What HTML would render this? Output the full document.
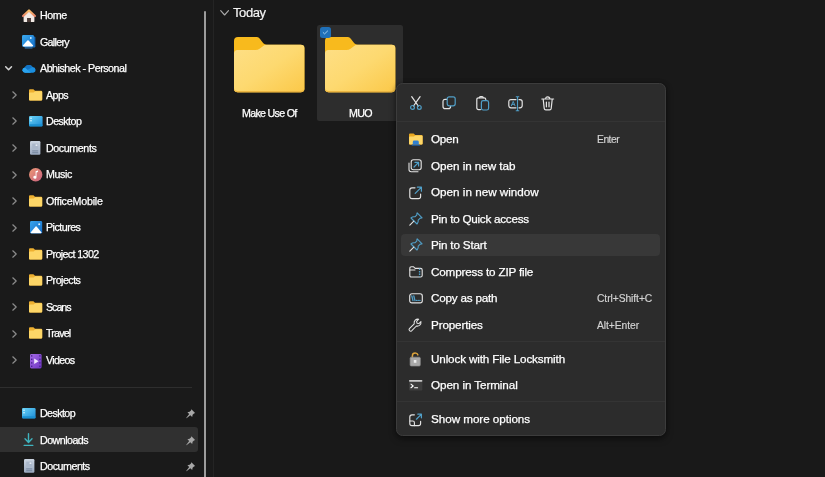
<!DOCTYPE html>
<html><head><meta charset="utf-8"><title>File Explorer</title>
<style>
*{box-sizing:border-box;margin:0;padding:0}
html,body{width:825px;height:477px;overflow:hidden;background:#191919;font-family:"Liberation Sans",sans-serif;color:#fff}
body{position:relative}
#sb{position:absolute;left:0;top:0;width:213px;height:477px;background:#1a1a1a}
#div{position:absolute;left:212.7px;top:0;width:1.8px;height:477px;background:#242424}
#scr{position:absolute;left:204.2px;top:11px;width:1.7px;height:470px;background:#9c9c9c;border-radius:1px}
svg{position:absolute;overflow:visible}
.tx{position:absolute;white-space:pre;line-height:normal;will-change:transform;-webkit-text-stroke:.25px currentColor}
.sep{position:absolute;left:0;top:386.5px;width:192px;height:1px;background:#2e2e2e}
.selrow{position:absolute;left:0;top:427px;width:197.5px;height:25.4px;background:#303030;border-radius:0 3px 3px 0}
.selbox{position:absolute;left:317.2px;top:25.1px;width:86.2px;height:96.2px;background:#2d2d2d;border-radius:2.5px}
.chk{position:absolute;left:320px;top:27.2px;width:10.8px;height:10.4px;background:#1f70b8;border-radius:2.5px}
.chk svg{left:0;top:0}
#menu{position:absolute;left:396px;top:83.4px;width:270px;height:352.6px;background:#2c2c2c;border:1px solid #3c3c3c;border-radius:6.5px;box-shadow:0 3px 7px rgba(0,0,0,.4),0 0 4px rgba(0,0,0,.3)}
.msep{position:absolute;left:397px;width:268px;height:1px;background:#343434}
.hov{position:absolute;left:401.3px;top:234.1px;width:258.7px;height:22.2px;background:#383838;border-radius:4px}
</style></head><body>
<div id="sb">
<svg style="left:22.1px;top:9.4px" width="14" height="13.2" viewBox="0 0 14 13.2"><defs><linearGradient id="hr" x1="0" y1="0" x2="0" y2="1"><stop offset="0" stop-color="#f8bf6a"/><stop offset="1" stop-color="#e98468"/></linearGradient></defs><path d="M1.6 6V12.2Q1.6 13.1 2.5 13.1H5.3V9H8.7V13.1H11.5Q12.4 13.1 12.4 12.2V6L7 1.6Z" fill="#f1e9e4"/><path d="M5.3 9H8.7V13.1H5.3Z" fill="#4d3c37"/><path d="M1.1 7L7 1.5L12.9 7" fill="none" stroke="url(#hr)" stroke-width="2.3" stroke-linecap="round" stroke-linejoin="round"/></svg>
<div class="tx" style="left:40.2px;top:9.02px;font-size:10.7px;letter-spacing:-0.429px;color:#fff;">Home</div>
<svg style="left:22.2px;top:34.8px" width="13.6" height="13.6" viewBox="0 0 13.6 13.6"><defs><linearGradient id="gg" x1="0" y1="0" x2="1" y2="1"><stop offset="0" stop-color="#3cabf0"/><stop offset="1" stop-color="#1470c8"/></linearGradient></defs><rect x="2" y="1.4" width="11.4" height="11" rx="1.2" fill="#1567b5"/><rect x="0" y="0" width="12" height="12" rx="1.4" fill="url(#gg)"/><path d="M.8 10.6L5.4 5.4Q6 4.9 6.6 5.4L11.2 10.6Q11 11.4 10.4 11.4H1.6Q1 11.4 .8 10.6Z" fill="#fff"/><circle cx="8.8" cy="3" r=".9" fill="#d8efff"/><rect x="2.6" y="12.6" width="8" height=".9" rx=".4" fill="#2f7ec2"/></svg>
<div class="tx" style="left:40.2px;top:35.54px;font-size:10.7px;letter-spacing:-0.694px;color:#fff;">Gallery</div>
<svg style="left:4.6px;top:66px" width="7.2" height="4.6" viewBox="0 0 7.2 4.6" fill="none" stroke="#d4d4d4" stroke-width="1.5" stroke-linecap="round" stroke-linejoin="round"><path d="M.7 .7L3.6 3.8L6.5 .7"/></svg>
<svg style="left:21.9px;top:64.8px" width="14.4" height="7.8" preserveAspectRatio="none" viewBox="0 0 14.4 9"><path d="M3.2 9A3.1 3.1 0 0 1 2.8 2.9A4.3 4.3 0 0 1 10.6 2.2A3.5 3.5 0 0 1 11.2 9Z" fill="#1a8fe0"/><path d="M2.8 2.9A4.3 4.3 0 0 1 10.6 2.2L5 6Z" fill="#1373c4"/><path d="M3.2 9A3.1 3.1 0 0 1 2.8 2.9L9 9Z" fill="#2aa3ee"/></svg>
<div class="tx" style="left:40.2px;top:62.06px;font-size:10.7px;letter-spacing:-0.492px;color:#fff;">Abhishek - Personal</div>
<svg style="left:12.2px;top:90.96000000000001px" width="5" height="8" viewBox="0 0 5 8" fill="none" stroke="#8c8c8c" stroke-width="1.2" stroke-linecap="round" stroke-linejoin="round"><path d="M.8 .8L4.2 4L.8 7.2"/></svg>
<svg style="left:28.8px;top:88.5px" width="13.2" height="11.6" viewBox="0 0 13.2 11.6"><path d="M0 1.2Q0 .2 1 .2H4.4L6 1.8H12.2Q13.2 1.8 13.2 2.8V10.4Q13.2 11.4 12.2 11.4H1Q0 11.4 0 10.4Z" fill="#eeb030"/><path d="M0 4.2Q0 3.4 .9 3.4H4.6L6.2 2.2H12.3Q13.2 2.2 13.2 3V10.5Q13.2 11.5 12.2 11.5H1Q0 11.5 0 10.5Z" fill="#fdd667"/></svg>
<div class="tx" style="left:46.4px;top:88.58px;font-size:10.7px;letter-spacing:-0.594px;color:#fff;">Apps</div>
<svg style="left:12.2px;top:117.48px" width="5" height="8" viewBox="0 0 5 8" fill="none" stroke="#8c8c8c" stroke-width="1.2" stroke-linecap="round" stroke-linejoin="round"><path d="M.8 .8L4.2 4L.8 7.2"/></svg>
<svg style="left:28.8px;top:115.6px" width="13.6" height="10.6" viewBox="0 0 13.6 10.6"><defs><linearGradient id="dg115" x1="0" y1="0" x2="1" y2="1"><stop offset="0" stop-color="#6ad4f7"/><stop offset="1" stop-color="#1c8bd6"/></linearGradient></defs><rect x="0" y="0" width="13.6" height="10.2" rx="1.2" fill="url(#dg115)"/><rect x="0" y="8.2" width="13.6" height="2.2" rx="1" fill="#1a8fd0"/><rect x="1.3" y="1.6" width="1.4" height="1.4" fill="#d5f1fc"/><rect x="1.3" y="4" width="1.4" height="1.4" fill="#d5f1fc"/></svg>
<div class="tx" style="left:46.4px;top:115.10px;font-size:10.7px;letter-spacing:-0.560px;color:#fff;">Desktop</div>
<svg style="left:12.2px;top:143.99999999999997px" width="5" height="8" viewBox="0 0 5 8" fill="none" stroke="#8c8c8c" stroke-width="1.2" stroke-linecap="round" stroke-linejoin="round"><path d="M.8 .8L4.2 4L.8 7.2"/></svg>
<svg style="left:30.4px;top:141.2px" width="10.4" height="13.8" viewBox="0 0 10.4 13.8"><defs><linearGradient id="dc141" x1="0" y1="0" x2="0" y2="1"><stop offset="0" stop-color="#ccd5e1"/><stop offset="1" stop-color="#9aa9bf"/></linearGradient></defs><rect x="0" y="0" width="10.4" height="13.8" rx="1.2" fill="url(#dc141)"/><rect x="2.2" y="2.6" width="6" height="5.2" fill="#aab7ca"/><rect x="5.6" y="3.4" width="1.8" height="1.6" fill="#e6ebf2"/><rect x="2.2" y="9.4" width="6" height="1" fill="#76879f"/><rect x="2.2" y="11.2" width="6" height="1" fill="#76879f"/></svg>
<div class="tx" style="left:46.4px;top:141.62px;font-size:10.7px;letter-spacing:-0.407px;color:#fff;">Documents</div>
<svg style="left:12.2px;top:170.51999999999998px" width="5" height="8" viewBox="0 0 5 8" fill="none" stroke="#8c8c8c" stroke-width="1.2" stroke-linecap="round" stroke-linejoin="round"><path d="M.8 .8L4.2 4L.8 7.2"/></svg>
<svg style="left:28.8px;top:168.0px" width="13.4" height="13.4" viewBox="0 0 13.4 13.4"><defs><linearGradient id="mg" x1="0" y1="0" x2="1" y2="1"><stop offset="0" stop-color="#ee9a76"/><stop offset="1" stop-color="#c75f7d"/></linearGradient></defs><circle cx="6.7" cy="6.7" r="6.7" fill="url(#mg)"/><path d="M6.6 3.2L9 2.6V4L7.5 4.4V9.2A1.6 1.5 0 1 1 6.6 7.9Z" fill="#fff"/></svg>
<div class="tx" style="left:46.4px;top:168.14px;font-size:10.7px;letter-spacing:-0.384px;color:#fff;">Music</div>
<svg style="left:12.2px;top:197.03999999999996px" width="5" height="8" viewBox="0 0 5 8" fill="none" stroke="#8c8c8c" stroke-width="1.2" stroke-linecap="round" stroke-linejoin="round"><path d="M.8 .8L4.2 4L.8 7.2"/></svg>
<svg style="left:28.8px;top:194.5px" width="13.2" height="11.6" viewBox="0 0 13.2 11.6"><path d="M0 1.2Q0 .2 1 .2H4.4L6 1.8H12.2Q13.2 1.8 13.2 2.8V10.4Q13.2 11.4 12.2 11.4H1Q0 11.4 0 10.4Z" fill="#eeb030"/><path d="M0 4.2Q0 3.4 .9 3.4H4.6L6.2 2.2H12.3Q13.2 2.2 13.2 3V10.5Q13.2 11.5 12.2 11.5H1Q0 11.5 0 10.5Z" fill="#fdd667"/></svg>
<div class="tx" style="left:46.4px;top:194.66px;font-size:10.7px;letter-spacing:-0.202px;color:#fff;">OfficeMobile</div>
<svg style="left:12.2px;top:223.55999999999997px" width="5" height="8" viewBox="0 0 5 8" fill="none" stroke="#8c8c8c" stroke-width="1.2" stroke-linecap="round" stroke-linejoin="round"><path d="M.8 .8L4.2 4L.8 7.2"/></svg>
<svg style="left:29.6px;top:221.2px" width="12.2" height="12.6" viewBox="0 0 12.2 12.6"><defs><linearGradient id="pg221" x1="0" y1="0" x2="1" y2="1"><stop offset="0" stop-color="#3aa5ee"/><stop offset="1" stop-color="#1169c4"/></linearGradient></defs><rect width="12.2" height="12.6" rx="1.4" fill="url(#pg221)"/><path d="M.6 11.6L5.6 5.6Q6.1 5.1 6.6 5.6L11.6 11.6Q11.4 12.2 10.8 12.2H1.4Q.8 12.2 .6 11.6Z" fill="#fff"/><circle cx="9.2" cy="3.2" r="1" fill="#d8efff"/></svg>
<div class="tx" style="left:46.4px;top:221.18px;font-size:10.7px;letter-spacing:-0.526px;color:#fff;">Pictures</div>
<svg style="left:12.2px;top:250.07999999999998px" width="5" height="8" viewBox="0 0 5 8" fill="none" stroke="#8c8c8c" stroke-width="1.2" stroke-linecap="round" stroke-linejoin="round"><path d="M.8 .8L4.2 4L.8 7.2"/></svg>
<svg style="left:28.8px;top:247.6px" width="13.2" height="11.6" viewBox="0 0 13.2 11.6"><path d="M0 1.2Q0 .2 1 .2H4.4L6 1.8H12.2Q13.2 1.8 13.2 2.8V10.4Q13.2 11.4 12.2 11.4H1Q0 11.4 0 10.4Z" fill="#eeb030"/><path d="M0 4.2Q0 3.4 .9 3.4H4.6L6.2 2.2H12.3Q13.2 2.2 13.2 3V10.5Q13.2 11.5 12.2 11.5H1Q0 11.5 0 10.5Z" fill="#fdd667"/></svg>
<div class="tx" style="left:46.4px;top:247.70px;font-size:10.7px;letter-spacing:-0.618px;color:#fff;">Project 1302</div>
<svg style="left:12.2px;top:276.59999999999997px" width="5" height="8" viewBox="0 0 5 8" fill="none" stroke="#8c8c8c" stroke-width="1.2" stroke-linecap="round" stroke-linejoin="round"><path d="M.8 .8L4.2 4L.8 7.2"/></svg>
<svg style="left:28.8px;top:274.1px" width="13.2" height="11.6" viewBox="0 0 13.2 11.6"><path d="M0 1.2Q0 .2 1 .2H4.4L6 1.8H12.2Q13.2 1.8 13.2 2.8V10.4Q13.2 11.4 12.2 11.4H1Q0 11.4 0 10.4Z" fill="#eeb030"/><path d="M0 4.2Q0 3.4 .9 3.4H4.6L6.2 2.2H12.3Q13.2 2.2 13.2 3V10.5Q13.2 11.5 12.2 11.5H1Q0 11.5 0 10.5Z" fill="#fdd667"/></svg>
<div class="tx" style="left:46.4px;top:274.22px;font-size:10.7px;letter-spacing:-0.526px;color:#fff;">Projects</div>
<svg style="left:12.2px;top:303.11999999999995px" width="5" height="8" viewBox="0 0 5 8" fill="none" stroke="#8c8c8c" stroke-width="1.2" stroke-linecap="round" stroke-linejoin="round"><path d="M.8 .8L4.2 4L.8 7.2"/></svg>
<svg style="left:28.8px;top:300.6px" width="13.2" height="11.6" viewBox="0 0 13.2 11.6"><path d="M0 1.2Q0 .2 1 .2H4.4L6 1.8H12.2Q13.2 1.8 13.2 2.8V10.4Q13.2 11.4 12.2 11.4H1Q0 11.4 0 10.4Z" fill="#eeb030"/><path d="M0 4.2Q0 3.4 .9 3.4H4.6L6.2 2.2H12.3Q13.2 2.2 13.2 3V10.5Q13.2 11.5 12.2 11.5H1Q0 11.5 0 10.5Z" fill="#fdd667"/></svg>
<div class="tx" style="left:46.4px;top:300.74px;font-size:10.7px;letter-spacing:-1.024px;color:#fff;">Scans</div>
<svg style="left:12.2px;top:329.64px" width="5" height="8" viewBox="0 0 5 8" fill="none" stroke="#8c8c8c" stroke-width="1.2" stroke-linecap="round" stroke-linejoin="round"><path d="M.8 .8L4.2 4L.8 7.2"/></svg>
<svg style="left:28.8px;top:327.1px" width="13.2" height="11.6" viewBox="0 0 13.2 11.6"><path d="M0 1.2Q0 .2 1 .2H4.4L6 1.8H12.2Q13.2 1.8 13.2 2.8V10.4Q13.2 11.4 12.2 11.4H1Q0 11.4 0 10.4Z" fill="#eeb030"/><path d="M0 4.2Q0 3.4 .9 3.4H4.6L6.2 2.2H12.3Q13.2 2.2 13.2 3V10.5Q13.2 11.5 12.2 11.5H1Q0 11.5 0 10.5Z" fill="#fdd667"/></svg>
<div class="tx" style="left:46.4px;top:327.26px;font-size:10.7px;letter-spacing:-0.833px;color:#fff;">Travel</div>
<svg style="left:12.2px;top:356.15999999999997px" width="5" height="8" viewBox="0 0 5 8" fill="none" stroke="#8c8c8c" stroke-width="1.2" stroke-linecap="round" stroke-linejoin="round"><path d="M.8 .8L4.2 4L.8 7.2"/></svg>
<svg style="left:30.2px;top:353.5px" width="11.6" height="14.4" viewBox="0 0 11.6 14.4"><defs><linearGradient id="vg" x1="0" y1="0" x2="1" y2="1"><stop offset="0" stop-color="#a56be6"/><stop offset="1" stop-color="#7036c4"/></linearGradient></defs><rect width="11.6" height="14.4" rx="1.4" fill="url(#vg)"/><g fill="#4b2391"><rect x="1" y="1.2" width="1.4" height="1.4"/><rect x="1" y="4.6" width="1.4" height="1.4"/><rect x="1" y="8.2" width="1.4" height="1.4"/><rect x="1" y="11.6" width="1.4" height="1.4"/><rect x="9.2" y="1.2" width="1.4" height="1.4"/><rect x="9.2" y="4.6" width="1.4" height="1.4"/><rect x="9.2" y="8.2" width="1.4" height="1.4"/><rect x="9.2" y="11.6" width="1.4" height="1.4"/></g><path d="M4.2 4.4L8.6 7.2L4.2 10Z" fill="#f1e6ff"/></svg>
<div class="tx" style="left:46.4px;top:353.78px;font-size:10.7px;letter-spacing:-0.700px;color:#fff;">Videos</div>
<div class="sep"></div>
<div class="selrow"></div>
<svg style="left:22px;top:407.8px" width="13.6" height="10.6" viewBox="0 0 13.6 10.6"><defs><linearGradient id="dg407" x1="0" y1="0" x2="1" y2="1"><stop offset="0" stop-color="#6ad4f7"/><stop offset="1" stop-color="#1c8bd6"/></linearGradient></defs><rect x="0" y="0" width="13.6" height="10.2" rx="1.2" fill="url(#dg407)"/><rect x="0" y="8.2" width="13.6" height="2.2" rx="1" fill="#1a8fd0"/><rect x="1.3" y="1.6" width="1.4" height="1.4" fill="#d5f1fc"/><rect x="1.3" y="4" width="1.4" height="1.4" fill="#d5f1fc"/></svg>
<div class="tx" style="left:40.2px;top:407.32px;font-size:10.7px;letter-spacing:-0.603px;color:#fff;">Desktop</div>
<svg style="left:23.4px;top:433px" width="11" height="13.4" viewBox="0 0 11 13.4" fill="none" stroke="#3fb4bf" stroke-width="1.4" stroke-linecap="round" stroke-linejoin="round"><path d="M5.5 .8V9.2M2 5.8L5.5 9.4L9 5.8M1.2 12.4H9.8"/></svg>
<div class="tx" style="left:40.2px;top:433.72px;font-size:10.7px;letter-spacing:-0.542px;color:#fff;">Downloads</div>
<svg style="left:23.8px;top:459.2px" width="10.4" height="13.8" viewBox="0 0 10.4 13.8"><defs><linearGradient id="dc459" x1="0" y1="0" x2="0" y2="1"><stop offset="0" stop-color="#ccd5e1"/><stop offset="1" stop-color="#9aa9bf"/></linearGradient></defs><rect x="0" y="0" width="10.4" height="13.8" rx="1.2" fill="url(#dc459)"/><rect x="2.2" y="2.6" width="6" height="5.2" fill="#aab7ca"/><rect x="5.6" y="3.4" width="1.8" height="1.6" fill="#e6ebf2"/><rect x="2.2" y="9.4" width="6" height="1" fill="#76879f"/><rect x="2.2" y="11.2" width="6" height="1" fill="#76879f"/></svg>
<div class="tx" style="left:40.2px;top:460.12px;font-size:10.7px;letter-spacing:-0.485px;color:#fff;">Documents</div>
<svg style="left:186px;top:409.1px" width="9.4" height="9.4" viewBox="0 0 9.4 9.4"><path d="M5.4 .3L9.1 4L8 4.4L6.6 5.8L6.2 8L4.3 6.2L.5 9.2L.2 8.9L3.2 5.1L1.4 3.2L3.6 2.8L5 1.4Z" fill="#a8a8a8"/></svg>
<svg style="left:186px;top:435.6px" width="9.4" height="9.4" viewBox="0 0 9.4 9.4"><path d="M5.4 .3L9.1 4L8 4.4L6.6 5.8L6.2 8L4.3 6.2L.5 9.2L.2 8.9L3.2 5.1L1.4 3.2L3.6 2.8L5 1.4Z" fill="#a8a8a8"/></svg>
<svg style="left:186px;top:462.3px" width="9.4" height="9.4" viewBox="0 0 9.4 9.4"><path d="M5.4 .3L9.1 4L8 4.4L6.6 5.8L6.2 8L4.3 6.2L.5 9.2L.2 8.9L3.2 5.1L1.4 3.2L3.6 2.8L5 1.4Z" fill="#a8a8a8"/></svg>
</div>
<div id="scr"></div><div id="div"></div>
<svg style="left:219.7px;top:10px" width="9.2" height="5.8" viewBox="0 0 9.2 5.8" fill="none" stroke="#aaaaaa" stroke-width="1.15" stroke-linecap="round" stroke-linejoin="round"><path d="M.7 .7L4.6 5.0L8.5 .7"/></svg>
<div class="tx" style="left:232.7px;top:5.23px;font-size:13px;letter-spacing:-0.421px;color:#f4f4f4;-webkit-text-stroke:.18px currentColor">Today</div>
<div class="selbox"></div>
<svg style="left:234.4px;top:37.1px" width="70.4" height="55.3" preserveAspectRatio="none" viewBox="0 0 70.6 55.8"><defs><linearGradient id="bfa" x1="0" y1="0" x2="1" y2="1"><stop offset="0" stop-color="#fedf86"/><stop offset=".5" stop-color="#fdd970"/><stop offset="1" stop-color="#fbc848"/></linearGradient></defs><path d="M0 4Q0 0 4 0H22.4Q24.4 0 25.7 1.5L29.4 6.4Q30.7 7.9 33 7.9H66.8Q70.6 7.9 70.6 11.2V52Q70.6 55.8 66.8 55.8H3.8Q0 55.8 0 52Z" fill="#f8ba1d"/><path d="M0 16.8Q0 13.2 3.6 13.2H21.6Q24 13.2 25.6 11.8L29 9.3Q30.6 7.9 33 7.9H66.8Q70.6 7.9 70.6 11.2V52Q70.6 55.8 66.8 55.8H3.8Q0 55.8 0 52Z" fill="url(#bfa)"/><path d="M0 51V52Q0 55.8 3.8 55.8H66.8Q70.6 55.8 70.6 52V51Q70.6 54.6 66.8 54.6H3.8Q0 54.6 0 51Z" fill="#ecb540"/></svg>
<svg style="left:324.8px;top:37.1px" width="70.3" height="55.3" preserveAspectRatio="none" viewBox="0 0 70.6 55.8"><defs><linearGradient id="bfb" x1="0" y1="0" x2="1" y2="1"><stop offset="0" stop-color="#fedf86"/><stop offset=".5" stop-color="#fdd970"/><stop offset="1" stop-color="#fbc848"/></linearGradient></defs><path d="M0 4Q0 0 4 0H22.4Q24.4 0 25.7 1.5L29.4 6.4Q30.7 7.9 33 7.9H66.8Q70.6 7.9 70.6 11.2V52Q70.6 55.8 66.8 55.8H3.8Q0 55.8 0 52Z" fill="#f8ba1d"/><path d="M0 16.8Q0 13.2 3.6 13.2H21.6Q24 13.2 25.6 11.8L29 9.3Q30.6 7.9 33 7.9H66.8Q70.6 7.9 70.6 11.2V52Q70.6 55.8 66.8 55.8H3.8Q0 55.8 0 52Z" fill="url(#bfb)"/><path d="M0 51V52Q0 55.8 3.8 55.8H66.8Q70.6 55.8 70.6 52V51Q70.6 54.6 66.8 54.6H3.8Q0 54.6 0 51Z" fill="#ecb540"/></svg>
<div class="chk"><svg width="10.8" height="10.4" viewBox="0 0 10.8 10.4" fill="none" stroke="#a6d4f4" stroke-width=".95" stroke-linecap="round" stroke-linejoin="round"><path d="M3.2 5.6L4.6 6.9L7.6 4"/></svg></div>
<div class="tx" style="left:242.2px;top:106.92px;font-size:10.7px;letter-spacing:-0.707px;color:#fff;">Make Use Of</div>
<div class="tx" style="left:349.4px;top:106.92px;font-size:10.7px;letter-spacing:-0.646px;color:#fff;">MUO</div>
<div id="menu"></div>
<svg style="left:408.6px;top:96px" width="14" height="15" viewBox="0 0 14 15" fill="none" stroke-linecap="round" stroke-linejoin="round" ><path d="M2.7 .7L9.3 10M11.1 .7L4.5 10" stroke="#e4e4e4" stroke-width="1.25"/><circle cx="3.5" cy="11.4" r="1.9" stroke="#509fc8" stroke-width="1.2"/><circle cx="10.3" cy="11.4" r="1.9" stroke="#509fc8" stroke-width="1.2"/></svg>
<svg style="left:442px;top:96.4px" width="14" height="14" viewBox="0 0 14 14" fill="none" stroke-linecap="round" stroke-linejoin="round" ><path d="M4.6 3.4H3.2Q1 3.4 1 5.6V10.4Q1 12.6 3.2 12.6H6.4Q8.6 12.6 8.6 10.4" stroke="#e4e4e4" stroke-width="1.2"/><rect x="5.2" y=".8" width="8" height="9" rx="2" stroke="#509fc8" stroke-width="1.2"/></svg>
<svg style="left:475.6px;top:96px" width="14" height="15" viewBox="0 0 14 15" fill="none" stroke-linecap="round" stroke-linejoin="round" ><path d="M4.4 13.6H2.6Q.8 13.6 .8 11.8V3.6Q.8 1.8 2.6 1.8H8Q9.8 1.8 9.8 3.4" stroke="#e4e4e4" stroke-width="1.2"/><path d="M3.4 1.8Q3.4 .6 4.4 .6H6.2Q7.2 .6 7.2 1.8" stroke="#e4e4e4" stroke-width="1.1"/><rect x="5.4" y="4.6" width="7.2" height="9.4" rx="1.8" stroke="#509fc8" stroke-width="1.2"/></svg>
<svg style="left:507.6px;top:95.6px" width="16" height="16" viewBox="0 0 16 16" fill="none" stroke-linecap="round" stroke-linejoin="round" ><path d="M8 3.6H3Q.8 3.6 .8 5.8V9.6Q.8 11.8 3 11.8H8M11 3.6H12Q14.2 3.6 14.2 5.8V9.6Q14.2 11.8 12 11.8H11" stroke="#e4e4e4" stroke-width="1.2"/><path d="M9.5 1V14.6M8.2 .8H10.8M8.2 14.8H10.8" stroke="#509fc8" stroke-width="1.1"/><path d="M3.4 9.8L5.2 5.4L7 9.8M4 8.4H6.4" stroke="#509fc8" stroke-width=".9"/></svg>
<svg style="left:541.4px;top:96px" width="14" height="15" viewBox="0 0 14 15" fill="none" stroke-linecap="round" stroke-linejoin="round" ><path d="M.8 3H12.6M4.6 3Q4.6 .8 6.7 .8Q8.8 .8 8.8 3M2.2 3.2L3.2 12.4Q3.4 13.8 4.8 13.8H8.6Q10 13.8 10.2 12.4L11.2 3.2M5.4 6V10.8M8 6V10.8" stroke="#e4e4e4" stroke-width="1.2"/></svg>
<div class="msep" style="top:121.4px"></div>
<div class="hov"></div>
<div class="tx" style="left:431.4px;top:132.21px;font-size:11.7px;letter-spacing:-0.273px;color:#fff;">Open</div>
<div class="tx" style="left:431.4px;top:158.71px;font-size:11.7px;letter-spacing:-0.042px;color:#fff;">Open in new tab</div>
<div class="tx" style="left:431.4px;top:185.21px;font-size:11.7px;letter-spacing:-0.003px;color:#fff;">Open in new window</div>
<div class="tx" style="left:431.4px;top:211.71px;font-size:11.7px;letter-spacing:-0.250px;color:#fff;">Pin to Quick access</div>
<div class="tx" style="left:431.4px;top:238.21px;font-size:11.7px;letter-spacing:-0.194px;color:#fff;">Pin to Start</div>
<div class="tx" style="left:431.4px;top:264.71px;font-size:11.7px;letter-spacing:-0.173px;color:#fff;">Compress to ZIP file</div>
<div class="tx" style="left:431.4px;top:291.21px;font-size:11.7px;letter-spacing:-0.206px;color:#fff;">Copy as path</div>
<div class="tx" style="left:431.4px;top:317.71px;font-size:11.7px;letter-spacing:-0.148px;color:#fff;">Properties</div>
<div class="tx" style="left:431.4px;top:351.81px;font-size:11.7px;letter-spacing:-0.142px;color:#fff;">Unlock with File Locksmith</div>
<div class="tx" style="left:431.4px;top:378.41px;font-size:11.7px;letter-spacing:-0.090px;color:#fff;">Open in Terminal</div>
<div class="tx" style="left:431.4px;top:412.21px;font-size:11.7px;letter-spacing:-0.056px;color:#fff;">Show more options</div>
<div class="tx" style="left:597.2px;top:133.58px;font-size:10.3px;letter-spacing:-0.485px;color:#d4d4d4;-webkit-text-stroke:.15px currentColor">Enter</div>
<div class="tx" style="left:596.8px;top:292.88px;font-size:10.3px;letter-spacing:-0.074px;color:#d4d4d4;-webkit-text-stroke:.15px currentColor">Ctrl+Shift+C</div>
<div class="tx" style="left:596.8px;top:319.88px;font-size:10.3px;letter-spacing:-0.071px;color:#d4d4d4;-webkit-text-stroke:.15px currentColor">Alt+Enter</div>
<div class="msep" style="top:341.4px"></div>
<div class="msep" style="top:401.2px"></div>
<svg style="left:408.6px;top:132.9px" width="13.6" height="13" viewBox="0 0 13.6 13" fill="none" stroke-linecap="round" stroke-linejoin="round" ><path d="M0 1.4Q0 .4 1 .4H4.6L6.2 2H12.6Q13.6 2 13.6 3V10.6Q13.6 11.6 12.6 11.6H1Q0 11.6 0 10.6Z" fill="#e9a820"/><path d="M0 4.4Q0 3.6 .9 3.6H4.8L6.4 2.4H12.7Q13.6 2.4 13.6 3.2V10.6Q13.6 11.6 12.6 11.6H1Q0 11.6 0 10.6Z" fill="#fdd667"/><path d="M3.8 9Q3.8 7.6 5.2 7.6H8.4Q9.8 7.6 9.8 9V11.6H3.8Z" fill="#2f7fd0"/><rect x="2.6" y="11.4" width="8.4" height="1.4" rx=".6" fill="#1d5fa8"/></svg>
<svg style="left:408.4px;top:158.6px" width="14" height="14" viewBox="0 0 14 14" fill="none" stroke-linecap="round" stroke-linejoin="round" ><path d="M1 4V10.6Q1 12.8 3.2 12.8H10" stroke="#e4e4e4" stroke-width="1.1"/><rect x="3.2" y=".8" width="10" height="10" rx="2.2" stroke="#e4e4e4" stroke-width="1.1"/><path d="M6 8L10.4 3.6M7 3.4H10.6V7" stroke="#509fc8" stroke-width="1.2"/></svg>
<svg style="left:409px;top:185.9px" width="14" height="14" viewBox="0 0 14 14" fill="none" stroke-linecap="round" stroke-linejoin="round" ><path d="M6 1.8H3Q.8 1.8 .8 4V10.4Q.8 12.6 3 12.6H9.4Q11.6 12.6 11.6 10.4V8" stroke="#e4e4e4" stroke-width="1.15"/><path d="M6.2 7.4L12 1.6M8.4 1.2H12.4V5.2" stroke="#509fc8" stroke-width="1.25"/></svg>
<svg style="left:408.9px;top:211.7px" width="14" height="14" viewBox="0 0 14 14" fill="none" stroke-linecap="round" stroke-linejoin="round" ><path d="M8.2 .9L13.1 5.8Q12.2 6.4 11.2 6.1L9.2 8.1Q9.6 10.4 8 12L2 6Q3.6 4.4 5.9 4.8L7.9 2.8Q7.6 1.8 8.2 .9Z" stroke="#509fc8" stroke-width="1.1"/><path d="M4.8 9.2L.8 13.2" stroke="#e4e4e4" stroke-width="1.1"/></svg>
<svg style="left:408.9px;top:238.2px" width="14" height="14" viewBox="0 0 14 14" fill="none" stroke-linecap="round" stroke-linejoin="round" ><path d="M8.2 .9L13.1 5.8Q12.2 6.4 11.2 6.1L9.2 8.1Q9.6 10.4 8 12L2 6Q3.6 4.4 5.9 4.8L7.9 2.8Q7.6 1.8 8.2 .9Z" stroke="#509fc8" stroke-width="1.1"/><path d="M4.8 9.2L.8 13.2" stroke="#e4e4e4" stroke-width="1.1"/></svg>
<svg style="left:408.6px;top:265.6px" width="14" height="12" viewBox="0 0 14 12" fill="none" stroke-linecap="round" stroke-linejoin="round" ><path d="M.8 2.4Q.8 .8 2.4 .8H4.6L6.2 2.4H11.6Q13.2 2.4 13.2 4V9.4Q13.2 11 11.6 11H2.4Q.8 11 .8 9.4Z" stroke="#e4e4e4" stroke-width="1.1"/><path d="M.8 4H6" stroke="#e4e4e4" stroke-width="1"/><path d="M10.6 2.6V10.8" stroke="#509fc8" stroke-width="1.4" stroke-dasharray="1.4 1.1" stroke-linecap="butt"/></svg>
<svg style="left:408.6px;top:292.5px" width="14" height="11" viewBox="0 0 14 11" fill="none" stroke-linecap="round" stroke-linejoin="round" ><rect x=".7" y=".7" width="12.6" height="9.2" rx="2.2" stroke="#e4e4e4" stroke-width="1.15"/><path d="M2.8 2.8L4 7.6M4.8 2.8L6 7.6" stroke="#509fc8" stroke-width="1.3"/><path d="M7.4 7.4H7.6M9.1 7.4H9.3M10.8 7.4H11" stroke="#509fc8" stroke-width="1.4"/></svg>
<svg style="left:408.4px;top:318.1px" width="14" height="14" viewBox="0 0 14 14" fill="none" stroke-linecap="round" stroke-linejoin="round" ><path d="M12.9 3.5Q13.4 6 11.6 7.4Q10.2 8.4 8.4 8L3.6 12.8Q2.6 13.6 1.5 12.7Q.6 11.6 1.4 10.6L6.2 5.8Q5.8 3.6 7.2 2.2Q8.6 .8 10.7 1.2L8.6 3.3L9 5.2L10.9 5.6Z" stroke="#e4e4e4" stroke-width="1.05"/></svg>
<svg style="left:410.4px;top:351.9px" width="10.4" height="14.2" viewBox="0 0 10.4 14.2" fill="none" stroke-linecap="round" stroke-linejoin="round" ><path d="M2.4 6V3.8Q2.4 .9 5.2 .9Q7.4 .9 7.9 2.9" stroke="#dda43c" stroke-width="1.5"/><rect x=".1" y="5.2" width="10.2" height="8.8" rx="1.1" fill="#a9a9a9" stroke="none"/><rect x=".1" y="5.2" width="10.2" height="8.8" rx="1.1" fill="none" stroke="#8b8b8b" stroke-width=".7"/><rect x="3.8" y="8" width="2.6" height="2.8" fill="#ededed" stroke="none"/></svg>
<svg style="left:408.6px;top:379.7px" width="13.4" height="10.4" viewBox="0 0 13.4 10.4" fill="none" stroke-linecap="round" stroke-linejoin="round" ><rect x="0" y="0" width="13.4" height="10.4" rx="1" fill="#3d3d3d" stroke="none"/><rect x="0" y="0" width="13.4" height="1.8" rx=".8" fill="#c9c9c9" stroke="none"/><path d="M2 4.2L4.2 6L2 7.8" stroke="#fff" stroke-width="1.1"/><path d="M5.6 7.8H8.6" stroke="#fff" stroke-width="1.1"/></svg>
<svg style="left:409px;top:413.1px" width="14" height="14" viewBox="0 0 14 14" fill="none" stroke-linecap="round" stroke-linejoin="round" ><path d="M5.4 1.8H3Q.8 1.8 .8 4V10.4Q.8 12.6 3 12.6H9.4Q11.6 12.6 11.6 10.4V8.2" stroke="#e4e4e4" stroke-width="1.15"/><path d="M.8 8H3.8Q5.4 8 5.4 9.6V12.6" stroke="#e4e4e4" stroke-width="1.1"/><path d="M7.4 6.2L12 1.6M8.8 1.2H12.4V4.8" stroke="#509fc8" stroke-width="1.25"/></svg>
</body></html>
